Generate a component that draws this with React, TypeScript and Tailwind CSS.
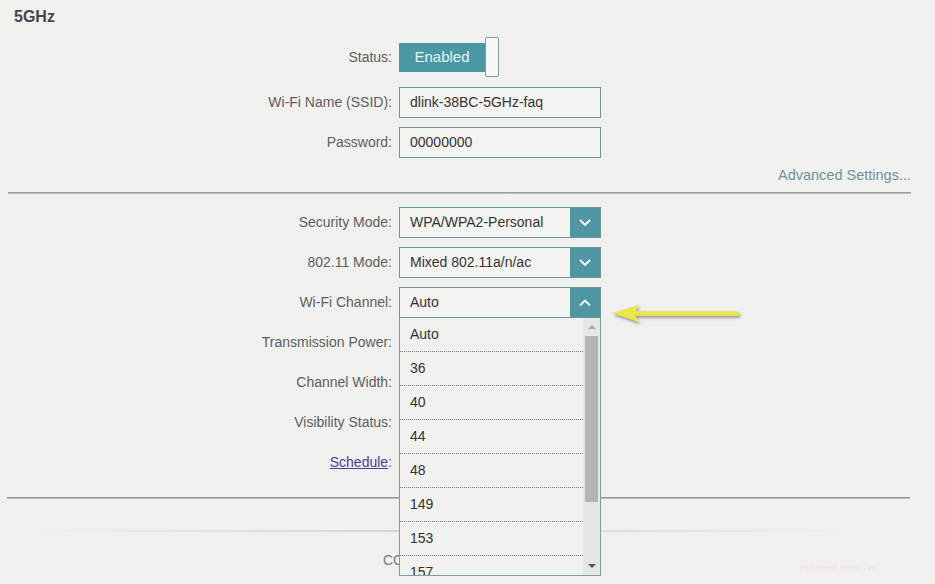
import React from "react";

const font = "font-['Liberation_Sans',Arial,sans-serif]";

function Chevron({ up = false }: { up?: boolean }) {
  return (
    <div className="w-[30px] h-full bg-[#4e97a3] flex items-center justify-center">
      <svg width="14" height="9" viewBox="0 0 14 9">
        <polyline
          points={up ? "2,7.5 7,2.5 12,7.5" : "2,2 7,7 12,2"}
          fill="none"
          stroke="#ffffff"
          strokeWidth="1.8"
        />
      </svg>
    </div>
  );
}

function Row({
  label,
  children,
  height = "h-[31px]",
  top = "mt-[9px]",
}: {
  label: React.ReactNode;
  children?: React.ReactNode;
  height?: string;
  top?: string;
}) {
  return (
    <div className={`flex items-center ${height} ${top}`}>
      <div className="w-[392px] text-right text-[14px] text-[#5e5e5e]">{label}</div>
      <div className="ml-[7px] h-full flex items-center relative">{children}</div>
    </div>
  );
}

function TextBox({ value }: { value: string }) {
  return (
    <div className="w-[202px] h-full border border-[#6f959c] bg-[#f3f3f1] flex items-center pl-[10px] text-[14px] text-[#333]">
      {value}
    </div>
  );
}

function Select({ value, up = false }: { value: string; up?: boolean }) {
  return (
    <div className="w-[202px] h-full border border-[#6f959c] bg-[#f3f3f1] flex items-stretch">
      <div className="flex-1 flex items-center pl-[10px] text-[14px] text-[#333]">{value}</div>
      <Chevron up={up} />
    </div>
  );
}

const channels = ["Auto", "36", "40", "44", "48", "149", "153", "157"];

function ChannelList() {
  return (
    <div className="absolute left-0 top-[31px] w-[202px] h-[258px] border-x border-b border-[#7a9ea6] bg-[#f1f1ef] overflow-hidden z-10">
      <div className="mr-[17px]">
        {channels.map((c) => (
          <div
            key={c}
            className="h-[34px] flex items-center pl-[10px] text-[14px] text-[#333] border-b border-dotted border-[#777]"
          >
            {c}
          </div>
        ))}
      </div>
      <div className="absolute right-0 top-0 bottom-0 w-[17px] bg-[#e6e6e4] flex flex-col items-center">
        <div className="h-[18px] flex items-center justify-center">
          <div className="w-0 h-0 border-x-[4px] border-x-transparent border-b-[4px] border-b-[#a8a8a8]" />
        </div>
        <div className="w-[13px] h-[166px] bg-[#b4b4b2]" />
        <div className="flex-1" />
        <div className="h-[18px] flex items-center justify-center">
          <div className="w-0 h-0 border-x-[4px] border-x-transparent border-t-[4px] border-t-[#555]" />
        </div>
      </div>
    </div>
  );
}

export default function App() {
  return (
    <div className={`w-[935px] h-[584px] bg-[#f0f0ee] relative overflow-hidden ${font}`}>
      <div className="h-[26px] pt-[8px] pl-[14px] leading-[18px] text-[16px] font-bold text-[#474747]">
        5GHz
      </div>

      <Row label="Status:" height="h-[40px]" top="mt-[11px]">
        <div className="w-[86px] h-[29px] bg-[#4b98a5] flex items-center justify-center text-[15px] text-[#e6f3f3]">
          Enabled
        </div>
        <div className="w-[14px] h-[40px] border border-[#7f9ba1] bg-[#f7f7f5] rounded-[2px]" />
      </Row>
      <Row label="Wi-Fi Name (SSID):" top="mt-[10px]">
        <TextBox value="dlink-38BC-5GHz-faq" />
      </Row>
      <Row label="Password:">
        <TextBox value="00000000" />
      </Row>

      <div className="h-[20px] mt-[8px] pr-[24px] flex items-center justify-end text-[14.5px] text-[#6e949c]">
        Advanced Settings...
      </div>
      <div className="mt-[6px] ml-[8px] w-[903px] h-[2px] bg-gradient-to-b from-[#8e8e8e] to-[#cfcfcd]" />

      <Row label="Security Mode:" top="mt-[13px]">
        <Select value="WPA/WPA2-Personal" />
      </Row>
      <Row label="802.11 Mode:">
        <Select value="Mixed 802.11a/n/ac" />
      </Row>
      <Row label="Wi-Fi Channel:">
        <Select value="Auto" up />
        <ChannelList />
      </Row>
      <Row label="Transmission Power:" />
      <Row label="Channel Width:" />
      <Row label="Visibility Status:" />
      <Row
        label={
          <span>
            <span className="text-[#4a3f9e] underline">Schedule</span>:
          </span>
        }
      />

      <div className="mt-[19px] ml-[7px] w-[903px] h-[2px] bg-gradient-to-b from-[#858585] to-[#cbcbc9]" />
      <div className="mt-[31px] ml-[30px] w-[825px] h-[2px] bg-gradient-to-r from-transparent via-[#d2d2d0] to-transparent" />
      <div className="mt-[18px] pl-[383px] text-[14px] text-[#7a7a7a]">CO</div>

      <div className="absolute left-[800px] top-[562px] text-[8px] text-[#efdede] font-['Liberation_Mono',monospace]">
        Diendantinhoc.vn
      </div>

      <svg className="absolute left-[604px] top-[298px]" width="145" height="32" viewBox="0 0 145 32">
        <defs>
          <filter id="sh" x="-10%" y="-50%" width="120%" height="200%">
            <feDropShadow dx="1" dy="2" stdDeviation="1.5" floodColor="#555" floodOpacity="0.6" />
          </filter>
        </defs>
        <g filter="url(#sh)">
          <line x1="30" y1="15.5" x2="133" y2="15.5" stroke="#e9e84c" strokeWidth="4.5" strokeLinecap="round" />
          <polygon points="8,15 35,7 30,15.5 35,24" fill="#e9e84c" />
        </g>
      </svg>
    </div>
  );
}
